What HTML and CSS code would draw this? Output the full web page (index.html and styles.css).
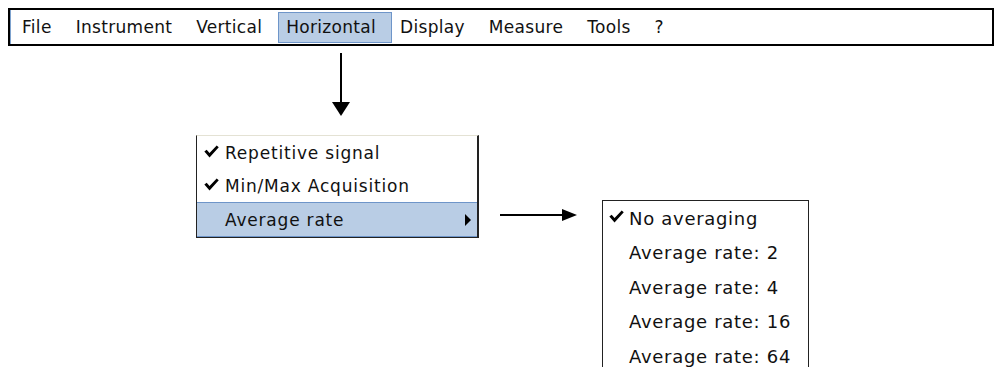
FILE: index.html
```html
<!DOCTYPE html>
<html lang="en">
<head>
  <meta charset="UTF-8">
  <meta name="viewport" content="width=device-width, initial-scale=1.0">
  <title>Horizontal menu - Average rate</title>
  <link rel="stylesheet" href="styles.css">
</head>
<body>

  <div class="menubar">
    <span class="menu-item">File</span>
    <span class="menu-item">Instrument</span>
    <span class="menu-item">Vertical</span>
    <span class="menu-item active">Horizontal</span>
    <span class="menu-item">Display</span>
    <span class="menu-item">Measure</span>
    <span class="menu-item">Tools</span>
    <span class="menu-item">?</span>
  </div>

  <div class="diagram">
    <svg class="arrow arrow-down" width="18" height="63" viewBox="0 0 18 63">
      <rect x="8" y="0" width="2" height="50" fill="#000"/>
      <polygon points="0,49 18,49 9,63" fill="#000"/>
    </svg>

    <ul class="popup popup-main">
      <li class="checked">
        <svg class="check" width="15" height="13" viewBox="0 0 13 11"><path d="M0.3 5.6 L2.3 4 L4.8 6.9 L11 0.2 L12.8 1.8 L4.8 10.6 Z" fill="#000"/></svg>
        Repetitive signal
      </li>
      <li class="checked">
        <svg class="check" width="15" height="13" viewBox="0 0 13 11"><path d="M0.3 5.6 L2.3 4 L4.8 6.9 L11 0.2 L12.8 1.8 L4.8 10.6 Z" fill="#000"/></svg>
        Min/Max Acquisition
      </li>
      <li class="selected">
        Average rate
        <svg class="submenu-arrow" width="6" height="12" viewBox="0 0 6 12"><polygon points="0,0 6,6 0,12" fill="#000"/></svg>
      </li>
    </ul>

    <svg class="arrow arrow-right" width="77" height="12" viewBox="0 0 77 12">
      <rect x="0" y="5" width="63" height="2" fill="#000"/>
      <polygon points="62,0 77,6 62,12" fill="#000"/>
    </svg>

    <ul class="popup popup-sub">
      <li class="checked">
        <svg class="check" width="15" height="13" viewBox="0 0 13 11"><path d="M0.3 5.6 L2.3 4 L4.8 6.9 L11 0.2 L12.8 1.8 L4.8 10.6 Z" fill="#000"/></svg>
        No averaging
      </li>
      <li>Average rate: 2</li>
      <li>Average rate: 4</li>
      <li>Average rate: 16</li>
      <li>Average rate: 64</li>
    </ul>
  </div>

</body>
</html>
```

FILE: styles.css
```css
body {
  margin: 0;
  height: 367px;
  background: #fff;
  font-family: "DejaVu Sans", Verdana, sans-serif;
  color: #111;
  overflow: hidden;
}
.menubar {
  display: flex;
  align-items: center;
  margin: 8px 0 0 8px;
  height: 34px;
  border: 2px solid #000;
  box-shadow: inset 1px 0 0 #7da2ce;
  padding-left: 4px;
  font-size: 17px;
  letter-spacing: 0.3px;
}
.menu-item {
  padding: 4px 15px 5px 7px;
  border: 1px solid transparent;
  white-space: nowrap;
}
.menu-item.active {
  background: #b9cde5;
  border-color: #6e95c9;
}
.diagram {
  position: relative;
  height: 321px;
}
.arrow {
  position: absolute;
  display: block;
}
.arrow-down {
  left: 332px;
  top: 7px;
}
.arrow-right {
  left: 500px;
  top: 163px;
}
.popup {
  position: absolute;
  list-style: none;
  margin: 0;
  padding: 0;
  background: #fff;
  border: 1px solid #222;
}
.popup li {
  position: relative;
  display: flex;
  align-items: center;
  white-space: nowrap;
}
.check {
  position: absolute;
  top: 50%;
  margin-top: -8px;
}
.popup-main {
  left: 196px;
  top: 89px;
  width: 280px;
  border-top-color: #e4e2d4;
  border-right-width: 2px;
  font-size: 17px;
  letter-spacing: 0.8px;
}
.popup-main li {
  height: 33px;
  padding-left: 28px;
}
.popup-main .check {
  left: 7px;
}
.popup-main li.selected {
  background: #b9cde5;
  border-top: 1px solid #6e95c9;
  border-bottom: 1px solid #6e95c9;
}
.submenu-arrow {
  margin-left: auto;
  margin-right: 6px;
}
.popup-sub {
  left: 602px;
  top: 154px;
  width: 205px;
  height: 166px;
  overflow: hidden;
  border-bottom: none;
  font-size: 18px;
  letter-spacing: 0.7px;
}
.popup-sub li {
  height: 34.5px;
  padding-left: 26px;
}
.popup-sub .check {
  left: 6px;
}
```
